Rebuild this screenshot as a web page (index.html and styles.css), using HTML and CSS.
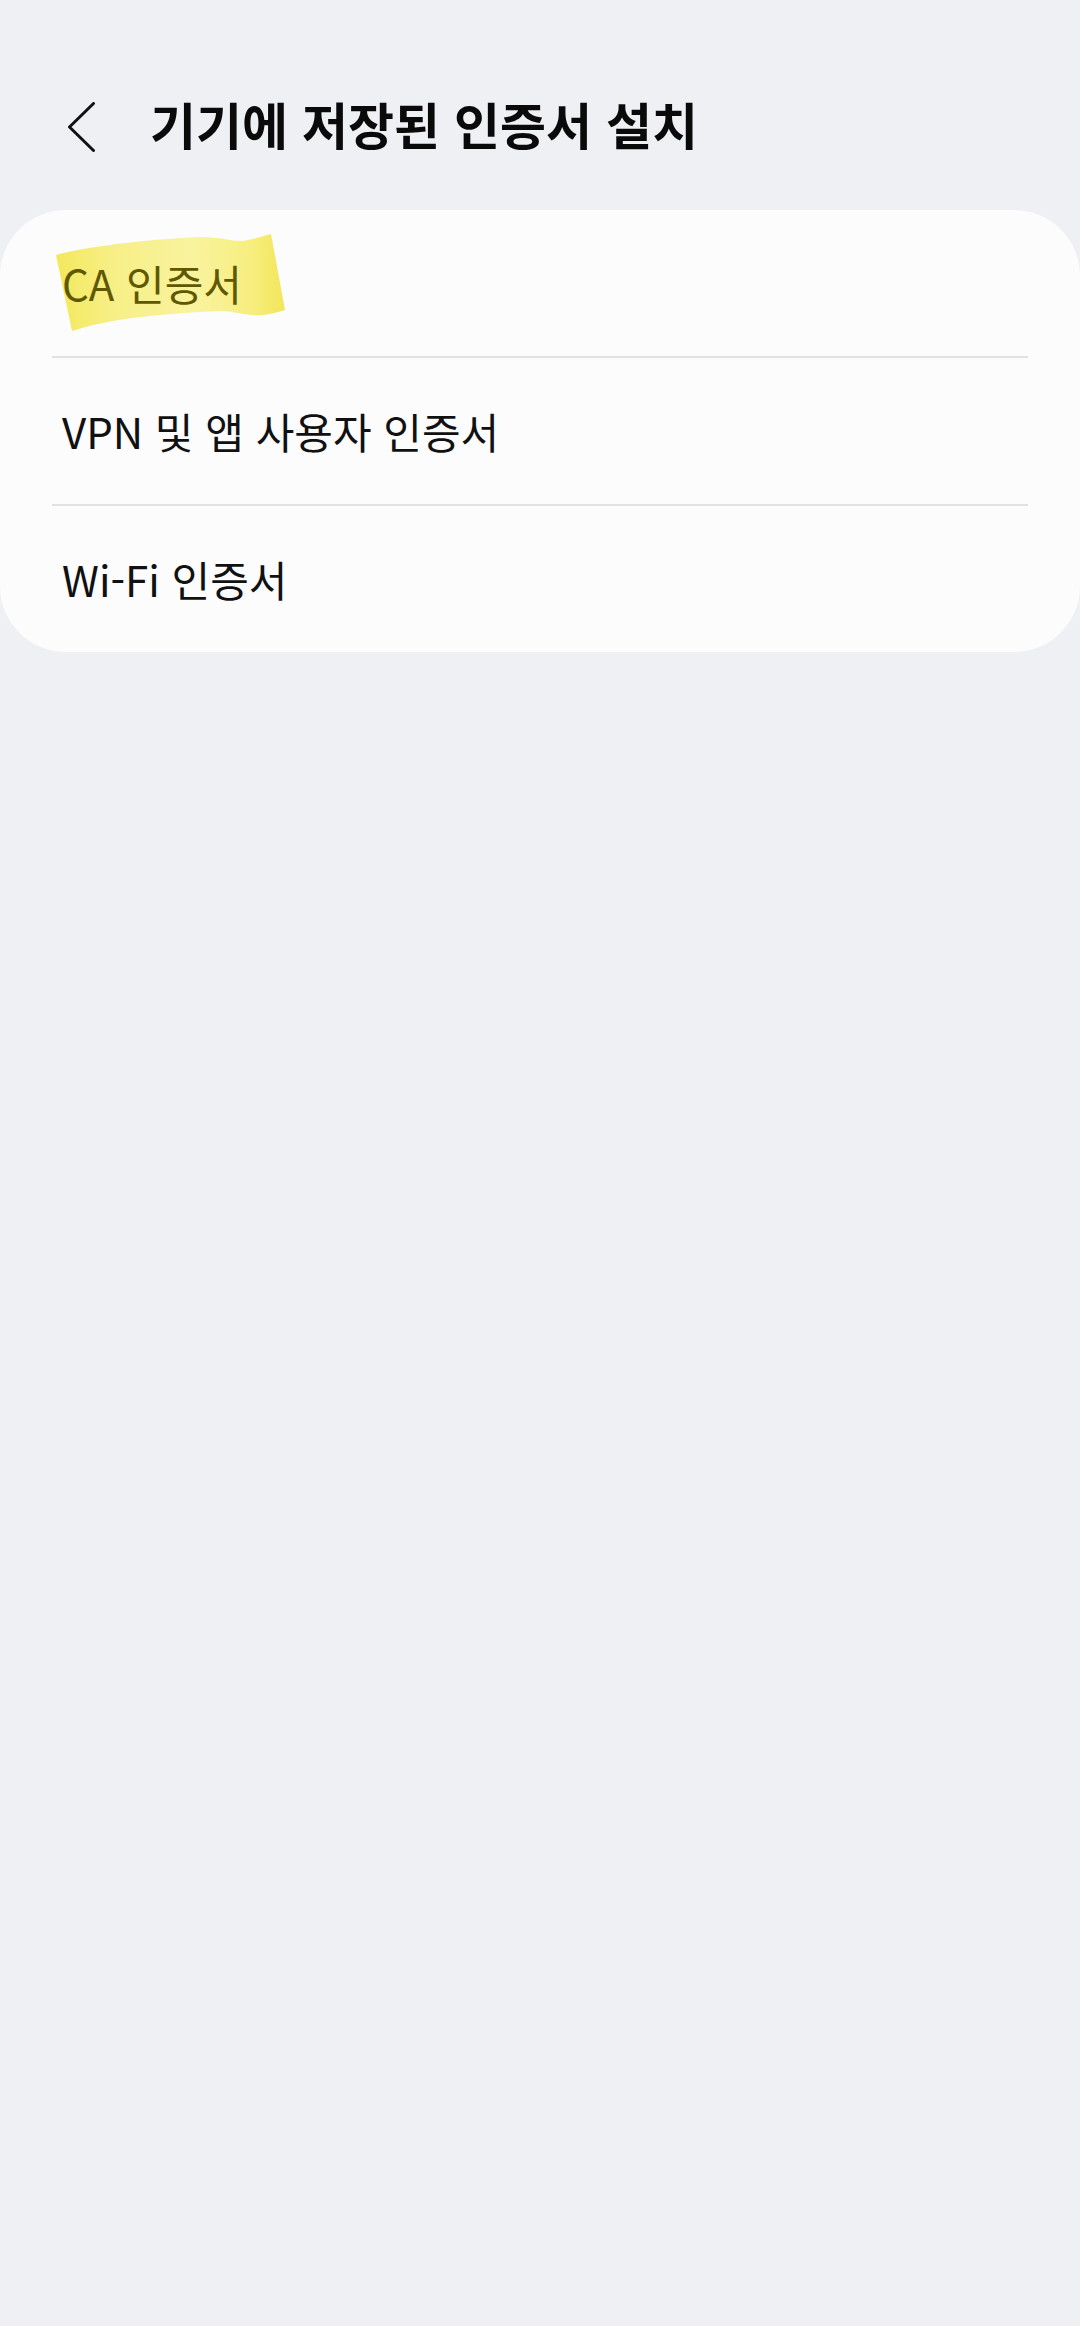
FILE: index.html
```html
<!DOCTYPE html>
<html lang="ko">
<head>
    <meta charset="UTF-8">
    <meta name="viewport" content="width=device-width, initial-scale=1.0">
    <title>기기에 저장된 인증서 설치</title>
    <link rel="stylesheet" href="styles.css">
</head>
<body>
    <div class="app-bar">
        <button class="back-btn" aria-label="뒤로">
            <svg width="28" height="50" viewBox="0 0 28 50">
                <polyline points="25.5,1.5 1.5,25 25.5,48.5" fill="none" stroke="#111" stroke-width="3" stroke-linecap="round" stroke-linejoin="round"/>
            </svg>
        </button>
        <h1 class="title">기기에 저장된 인증서 설치</h1>
    </div>

    <div class="card">
        <div class="row marked">
            <svg class="marker" width="300" height="146" viewBox="0 0 300 146">
                <defs>
                    <linearGradient id="hl" x1="0" y1="0" x2="1" y2="0">
                        <stop offset="0" stop-color="#f3e85c"/>
                        <stop offset="0.25" stop-color="#f7ef86"/>
                        <stop offset="0.6" stop-color="#f9f39e"/>
                        <stop offset="0.85" stop-color="#f7ee80"/>
                        <stop offset="1" stop-color="#f2e658"/>
                    </linearGradient>
                </defs>
                <path d="M56 45 C 90 36, 140 30, 200 27 C 220 27, 230 31, 242 31 C 252 30, 262 26, 271 24 L 285 100 C 272 104, 262 106, 252 105 C 240 104, 232 101, 220 101 C 170 103, 110 108, 72 121 Z" fill="url(#hl)"/>
            </svg>
            <span class="label">CA 인증서</span>
        </div>
        <div class="divider"></div>
        <div class="row">
            <span class="label">VPN 및 앱 사용자 인증서</span>
        </div>
        <div class="divider"></div>
        <div class="row">
            <span class="label">Wi-Fi 인증서</span>
        </div>
    </div>
</body>
</html>
```

FILE: styles.css
```css
body {
    font-family: "Noto Sans CJK KR", "Noto Sans", sans-serif;
    margin: 0;
    padding: 0;
    background: #eff0f4;
    color: #111;
    min-height: 2326px;
}
.app-bar {
    height: 166px;
    padding: 44px 0 0 68px;
    display: flex;
    align-items: center;
}
.back-btn {
    background: none;
    border: none;
    padding: 0;
    width: 28px;
    height: 50px;
    display: flex;
}
.title {
    margin: 0 0 8px 54px;
    font-size: 50px;
    font-weight: 700;
    color: #0a0a0a;
    line-height: 1;
}
.card {
    background: #fcfcfc;
    border-radius: 66px;
}
.row {
    height: 146px;
    padding-left: 62px;
    display: flex;
    align-items: center;
    position: relative;
}
.label {
    font-size: 42px;
    line-height: 1;
    position: relative;
}
.marked .label {
    color: #5f5800;
}
.marker {
    position: absolute;
    left: 0;
    top: 0;
}
.divider {
    height: 2px;
    margin: 0 52px;
    background: #e2e2e4;
}
```
